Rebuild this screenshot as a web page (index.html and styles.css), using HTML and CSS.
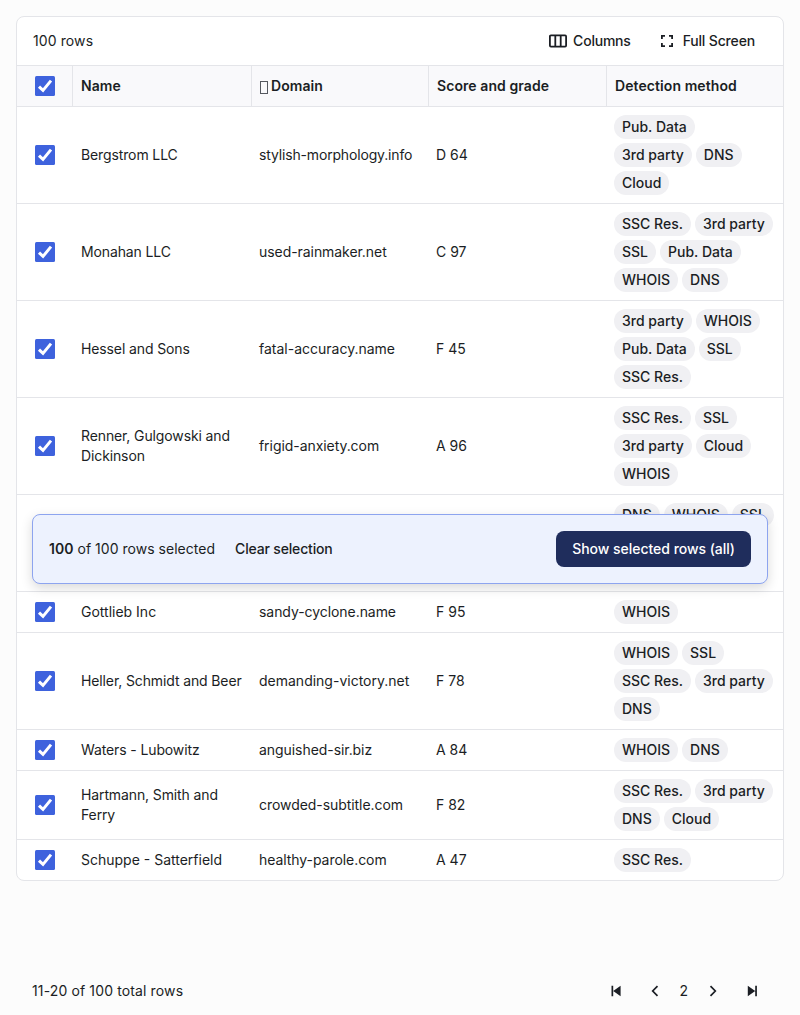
FILE: index.html
```
<!DOCTYPE html>
<html lang="en">
<head>
<meta charset="utf-8">
<title>Domains</title>
<link rel="stylesheet" href="styles.css">
</head>
<body>
<svg class="defs" aria-hidden="true"><symbol id="check" viewBox="0 0 20 20"><rect width="20" height="20" rx="1.5" fill="#3e62dd"/><path d="M4 10.6 8 14.4 16 4.6" fill="none" stroke="#fff" stroke-width="3"/></symbol></svg>
<main class="page">
<section class="card">
<div class="toolbar">
<span class="count">100 rows</span>
<button class="tool"><svg width="18" height="14" viewBox="0 0 18 14" fill="none" stroke="#1b1e24" stroke-width="1.8"><rect x=".9" y="1.4" width="16.2" height="11.2" rx="1"/><path d="M6.3 1.4v11.2M11.7 1.4v11.2"/></svg>Columns</button>
<button class="tool tool-full"><svg width="12" height="12" viewBox="0 0 12 12" fill="none" stroke="#1b1e24" stroke-width="1.8"><path d="M.9 4V.9H4M8 .9h3.1V4M11.1 8v3.1H8M4 11.1H.9V8"/></svg>Full Screen</button>
</div>
<div class="row head">
<div class="select"><svg class="check"><use href="#check"/></svg></div>
<div class="cell name">Name</div><div class="cell domain"><span class="glyph"></span>Domain</div><div class="cell">Score and grade</div><div class="cell">Detection method</div>
</div>
<div class="row"><div class="select"><svg class="check"><use href="#check"/></svg></div><div class="cell company">Bergstrom LLC</div><div class="cell host tight">stylish-morphology.info</div><div class="cell">D 64</div><div class="cell tags"><span>Pub. Data</span><span>3rd party</span><span>DNS</span><span>Cloud</span></div></div>
<div class="row"><div class="select"><svg class="check"><use href="#check"/></svg></div><div class="cell company">Monahan LLC</div><div class="cell host">used-rainmaker.net</div><div class="cell">C 97</div><div class="cell tags"><span>SSC Res.</span><span>3rd party</span><span>SSL</span><span>Pub. Data</span><span>WHOIS</span><span>DNS</span></div></div>
<div class="row"><div class="select"><svg class="check"><use href="#check"/></svg></div><div class="cell company">Hessel and Sons</div><div class="cell">fatal-accuracy.name</div><div class="cell">F 45</div><div class="cell tags"><span>3rd party</span><span>WHOIS</span><span>Pub. Data</span><span>SSL</span><span>SSC Res.</span></div></div>
<div class="row"><div class="select"><svg class="check"><use href="#check"/></svg></div><div class="cell company">Renner, Gulgowski and Dickinson</div><div class="cell host">frigid-anxiety.com</div><div class="cell">A 96</div><div class="cell tags"><span>SSC Res.</span><span>SSL</span><span>3rd party</span><span>Cloud</span><span>WHOIS</span></div></div>
<div class="row covered"><div class="select"></div><div class="cell"></div><div class="cell"></div><div class="cell"></div><div class="cell tags"><span>DNS</span><span>WHOIS</span><span>SSL</span></div></div>
<div class="row"><div class="select"><svg class="check"><use href="#check"/></svg></div><div class="cell">Gottlieb Inc</div><div class="cell host">sandy-cyclone.name</div><div class="cell">F 95</div><div class="cell tags"><span>WHOIS</span></div></div>
<div class="row"><div class="select"><svg class="check"><use href="#check"/></svg></div><div class="cell company">Heller, Schmidt and Beer</div><div class="cell">demanding-victory.net</div><div class="cell">F 78</div><div class="cell tags"><span>WHOIS</span><span>SSL</span><span>SSC Res.</span><span>3rd party</span><span>DNS</span></div></div>
<div class="row"><div class="select"><svg class="check"><use href="#check"/></svg></div><div class="cell company">Waters - Lubowitz</div><div class="cell host">anguished-sir.biz</div><div class="cell">A 84</div><div class="cell tags"><span>WHOIS</span><span>DNS</span></div></div>
<div class="row"><div class="select"><svg class="check"><use href="#check"/></svg></div><div class="cell company">Hartmann, Smith and Ferry</div><div class="cell host">crowded-subtitle.com</div><div class="cell">F 82</div><div class="cell tags"><span>SSC Res.</span><span>3rd party</span><span>DNS</span><span>Cloud</span></div></div>
<div class="row"><div class="select"><svg class="check"><use href="#check"/></svg></div><div class="cell">Schuppe - Satterfield</div><div class="cell host">healthy-parole.com</div><div class="cell">A 47</div><div class="cell tags"><span>SSC Res.</span></div></div>
</section>
<div class="selection">
<span class="selected"><b>100</b> of 100 rows selected</span>
<button class="clear">Clear selection</button>
<button class="primary">Show selected rows (all)</button>
</div>
<footer class="footer">
<span class="total"><span class="total-text">11-20 of 100 total rows</span></span>
<nav class="pager">
<svg width="10" height="12" viewBox="0 0 10 12" fill="#1b1e24"><path d="M.5 .8h1.7v10.4H.5zM9.6.8v10.4L2.2 6z"/></svg>
<svg class="prev" width="8" height="12" viewBox="0 0 8 12" fill="none" stroke="#1b1e24" stroke-width="1.7"><path d="M6.5 1.2 1.7 6l4.8 4.8"/></svg>
<span class="current">2</span>
<svg class="next" width="8" height="12" viewBox="0 0 8 12" fill="none" stroke="#1b1e24" stroke-width="1.7"><path d="m1.5 1.2 4.8 4.8-4.8 4.8"/></svg>
<svg width="10" height="12" viewBox="0 0 10 12" fill="#1b1e24"><path d="M8.2.8h1.7v10.4H8.2zM.8.8v10.4L8.2 6z"/></svg>
</nav>
</footer>
</main>
</body>
</html>
```
FILE: styles.css
```
* { box-sizing: border-box; }
body { margin: 0; background: #fcfcfc; color: #1b1e24; font: 14px/20px Inter, sans-serif; }
button { border: 0; background: none; padding: 0; font: 500 14px/20px Inter, sans-serif; color: inherit; display: flex; align-items: center; white-space: nowrap; }
svg { display: block; flex: none; }
.defs { width: 0; height: 0; position: absolute; }
.page { position: relative; height: 1015px; padding: 16px; display: flex; flex-direction: column; }
.card { border: 1px solid #e4e5e9; border-radius: 8px; background: #fff; overflow: hidden; }
.toolbar { height: 48px; padding: 0 28px 0 16px; display: flex; align-items: center; }
.count { flex: 1; letter-spacing: .1px; }
.tool { gap: 6px; letter-spacing: -.22px; }
.tool-full { margin-left: 30px; gap: 10px; letter-spacing: -.16px; }
.row { display: grid; grid-template-columns: 56px 178px 177px 178px 177px; border-top: 1px solid #e4e5e9; align-items: center; }
.select { display: flex; justify-content: center; }
.check { width: 20px; height: 20px; }
.cell { padding: 8px; }
.company { letter-spacing: -.12px; }
.host { letter-spacing: -.06px; }
.tight { letter-spacing: -.16px; }
.head { height: 41px; background: #f9f9fb; font-weight: 600; align-items: stretch; letter-spacing: .08px; }
.head .select { align-items: center; border-right: 1px solid #e4e5e9; }
.head .cell { padding: 10px 8px; border-left: 1px solid #e4e5e9; }
.head .name { border-left: 0; }
.domain { display: flex; align-items: center; gap: 3px; }
.glyph { width: 8px; height: 13px; margin-top: 3px; border: 1px solid #55585f; }
.tags { display: flex; flex-wrap: wrap; gap: 4px; padding-right: 9px; }
.tags span { padding: 2px 8px; border-radius: 12px; background: #f0f0f3; font-weight: 500; white-space: nowrap; }
.covered { height: 97px; align-items: start; }
.selection { position: absolute; left: 32px; right: 32px; top: 514px; height: 70px; padding: 0 16px; display: flex; align-items: center; border: 1px solid #8da4ef; border-radius: 8px; background: #edf2fe; box-shadow: 0 4px 12px rgba(0, 0, 0, .15); }
.selection b { font-weight: 600; }
.selected { letter-spacing: .03px; }
.clear { margin-left: 20px; letter-spacing: -.17px; }
.primary { margin-left: auto; height: 36px; padding: 0 16px; border-radius: 8px; background: #1f2d5c; color: #fff; letter-spacing: -.03px; }
.footer { margin-top: auto; margin-bottom: -2px; padding: 0 27px 0 16px; display: flex; align-items: center; height: 20px; }
.total { flex: 1; }
.total-text { letter-spacing: .13px; }
.pager { display: flex; align-items: center; }
.prev { margin-left: 30px; }
.current { margin: 0 21px 0 20px; }
.next { margin-right: 30px; }
```
